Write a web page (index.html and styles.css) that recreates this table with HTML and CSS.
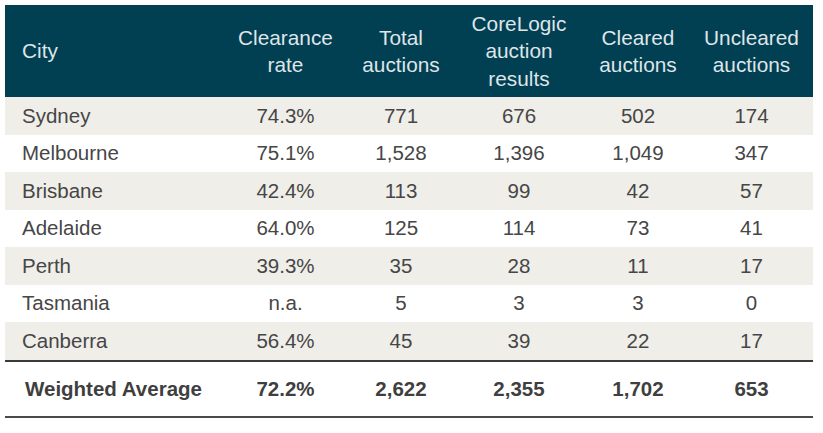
FILE: index.html
```html
<!DOCTYPE html>
<html lang="en">
<head>
<meta charset="utf-8">
<title>Auction results</title>
<link rel="stylesheet" href="styles.css">
</head>
<body>
<table class="results">
  <colgroup>
    <col class="c-city">
    <col class="c-rate">
    <col class="c-total">
    <col class="c-core">
    <col class="c-cleared">
    <col class="c-uncleared">
  </colgroup>
  <thead>
    <tr>
      <th class="city">City</th>
      <th>Clearance<br>rate</th>
      <th>Total<br>auctions</th>
      <th>CoreLogic<br>auction<br>results</th>
      <th>Cleared<br>auctions</th>
      <th>Uncleared<br>auctions</th>
    </tr>
  </thead>
  <tbody>
    <tr class="alt"><td class="city">Sydney</td><td>74.3%</td><td>771</td><td>676</td><td>502</td><td>174</td></tr>
    <tr><td class="city">Melbourne</td><td>75.1%</td><td>1,528</td><td>1,396</td><td>1,049</td><td>347</td></tr>
    <tr class="alt"><td class="city">Brisbane</td><td>42.4%</td><td>113</td><td>99</td><td>42</td><td>57</td></tr>
    <tr><td class="city">Adelaide</td><td>64.0%</td><td>125</td><td>114</td><td>73</td><td>41</td></tr>
    <tr class="alt"><td class="city">Perth</td><td>39.3%</td><td>35</td><td>28</td><td>11</td><td>17</td></tr>
    <tr><td class="city">Tasmania</td><td>n.a.</td><td>5</td><td>3</td><td>3</td><td>0</td></tr>
    <tr class="alt"><td class="city">Canberra</td><td>56.4%</td><td>45</td><td>39</td><td>22</td><td>17</td></tr>
  </tbody>
  <tfoot>
    <tr><td class="city">Weighted Average</td><td>72.2%</td><td>2,622</td><td>2,355</td><td>1,702</td><td>653</td></tr>
  </tfoot>
</table>
</body>
</html>
```

FILE: styles.css
```css
html, body {
  margin: 0;
  padding: 0;
  background: #ffffff;
}

body {
  font-family: "Liberation Sans", Arial, sans-serif;
  padding: 5px 0 0 5px;
}

.results {
  border-collapse: separate;
  border-spacing: 0;
  table-layout: fixed;
  width: 808px;
  font-size: 20.5px;
  color: #464646;
}

.c-city { width: 216px; }
.c-rate { width: 129px; }
.c-total { width: 102px; }
.c-core { width: 134px; }
.c-cleared { width: 104px; }
.c-uncleared { width: 123px; }

.results th {
  background: #013f52;
  color: #dfe5e8;
  font-weight: normal;
  font-size: 20.8px;
  height: 92px;
  line-height: 27.5px;
  padding: 0;
  text-align: center;
  vertical-align: middle;
  white-space: nowrap;
}

.results td {
  height: 37.5px;
  padding: 0;
  text-align: center;
  vertical-align: middle;
  line-height: 22px;
  white-space: nowrap;
}

.results .city {
  text-align: left;
  padding-left: 17px;
}

.results tbody tr.alt td {
  background: #efeee9;
}

.results tfoot td {
  height: 54px;
  font-weight: bold;
  color: #3f3f3f;
  border-top: 2px solid #3a3a3a;
  border-bottom: 2px solid #4a4a4a;
}

.results tfoot .city {
  padding-left: 20px;
}
```
